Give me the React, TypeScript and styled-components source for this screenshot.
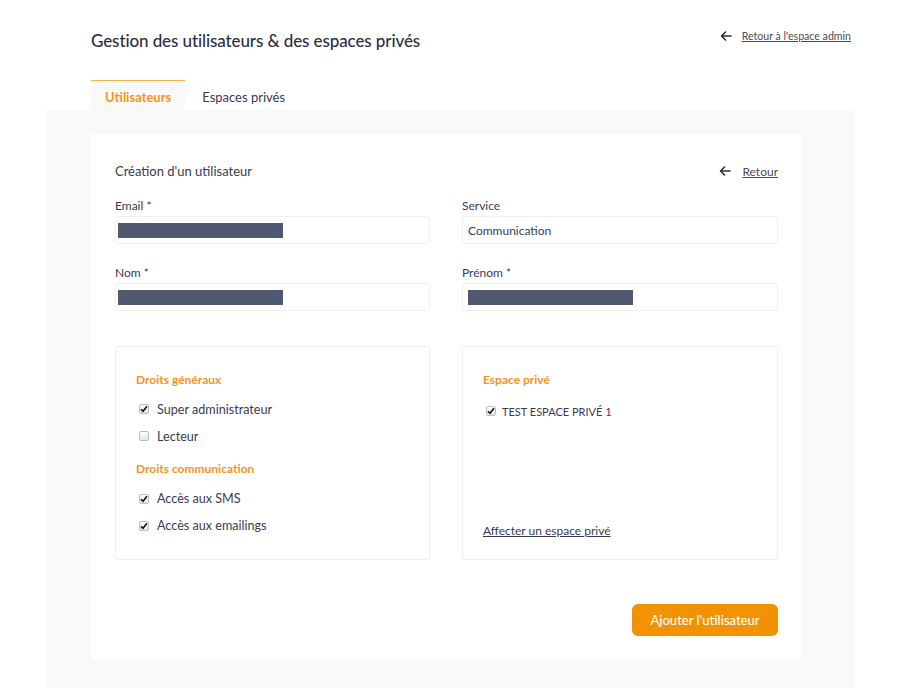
import React from "react";
import styled, { createGlobalStyle } from "styled-components";

const Global = createGlobalStyle`
  html, body { margin: 0; padding: 0; background: #ffffff; }
  body { font-family: Lato, "Noto Sans", sans-serif; color: #3b3b4f; }
  * { box-sizing: border-box; }
`;

const ORANGE = "#f7931e";

const Page = styled.div`
  width: 900px;
  height: 688px;
  overflow: hidden;
  display: flex;
  flex-direction: column;
`;

const Header = styled.header`
  display: flex;
  justify-content: space-between;
  align-items: flex-start;
  padding: 30px 49px 0 91px;
  height: 51px;
`;

const Title = styled.h1`
  margin: 0;
  font-size: 17px;
  line-height: 21px;
  font-weight: 500;
  color: #2e2e44;
  letter-spacing: -0.1px;
`;

const BackLink = styled.a<{ $size?: number; $top?: number }>`
  display: flex;
  align-items: center;
  gap: ${(p) => (p.$size ? 11 : 10)}px;
  margin-top: ${(p) => p.$top ?? 0}px;
  font-size: ${(p) => p.$size ?? 10.6}px;
  color: #4a4a5a;
  text-decoration: none;
  span { text-decoration: underline; }
  svg { flex: none; }
`;

const Tabs = styled.nav`
  display: flex;
  padding: 29px 0 0 91px;
  height: 59px;
  align-items: flex-end;
`;

const Tab = styled.div<{ $active?: boolean }>`
  height: 30px;
  padding: 2px 14px 0 14px;
  display: flex;
  align-items: center;
  font-size: 13px;
  font-weight: ${(p) => (p.$active ? 700 : 400)};
  color: ${(p) => (p.$active ? ORANGE : "#3b3b4f")};
  background: ${(p) => (p.$active ? "#f9f9f9" : "transparent")};
  border-top: 1px solid ${(p) => (p.$active ? "#f7b04f" : "transparent")};
  & + & { margin-left: 3px; }
`;

const Panel = styled.main`
  margin: 0 46px 0 46px;
  background: #f9f9f9;
  flex: 1;
  padding: 24px 53px 28px 45px;
`;

const Card = styled.section`
  background: #ffffff;
  padding: 27px 23px 24px 24px;
  display: flex;
  flex-direction: column;
`;

const CardHeader = styled.div`
  display: flex;
  justify-content: space-between;
  align-items: center;
  height: 20px;
  margin-bottom: 14px;
`;

const CardTitle = styled.h2`
  margin: 0;
  font-size: 13px;
  font-weight: 400;
  color: #3b3b4f;
`;

const Grid = styled.div`
  display: grid;
  grid-template-columns: 315px 316px;
  column-gap: 32px;
  row-gap: 18px;
`;

const Field = styled.div`
  display: flex;
  flex-direction: column;
`;

const Label = styled.label`
  font-size: 12px;
  line-height: 17px;
  color: #3b3b4f;
  height: 17px;
  margin-top: 2px;
  margin-bottom: 2px;
`;

const Input = styled.div<{ $inset?: number }>`
  height: 28px;
  border: 1px solid #f0f0f0;
  border-radius: 3px;
  padding: 0 6px 0 ${(p) => p.$inset ?? 2}px;
  display: flex;
  align-items: center;
  font-size: 12px;
  color: #3b3b4f;
`;

const Redacted = styled.div`
  width: 165px;
  height: 15px;
  background: #4f586e;
`;

const Boxes = styled.div`
  display: grid;
  grid-template-columns: 315px 316px;
  column-gap: 32px;
  margin-top: 35px;
`;

const Box = styled.div`
  height: 214px;
  border: 1px solid #eeeeee;
  border-radius: 3px;
  padding: 25px 20px 20px 20px;
  display: flex;
  flex-direction: column;
`;

const BoxTitle = styled.h3<{ $top?: number; $bottom?: number }>`
  margin: ${(p) => p.$top ?? 0}px 0 ${(p) => p.$bottom ?? 9}px 0;
  font-size: 12px;
  font-weight: 700;
  color: ${ORANGE};
  height: 16px;
`;

const CheckRow = styled.div<{ $small?: boolean }>`
  display: flex;
  align-items: center;
  height: 28.6px;
  padding-left: 3px;
  gap: ${(p) => (p.$small ? 6 : 8)}px;
  font-size: ${(p) => (p.$small ? 11 : 12.6)}px;
  color: #3b3b4f;
`;

const Box10 = styled.span`
  width: 10px;
  height: 10px;
  border: 1px solid #bdbdbd;
  border-radius: 2px;
  background: linear-gradient(#fdfdfd, #e6e6e6);
  display: inline-flex;
  align-items: center;
  justify-content: center;
  flex: none;
`;

const Spacer = styled.div`
  flex: 1;
`;

const Link = styled.a`
  font-size: 12px;
  color: #3b3b4f;
  text-decoration: underline;
  margin-bottom: 1px;
`;

const Footer = styled.div`
  display: flex;
  justify-content: flex-end;
  margin-top: 44px;
`;

const Button = styled.button`
  height: 32px;
  padding: 0 16px;
  background: #f39200;
  border: none;
  border-radius: 6px;
  color: #ffffff;
  font-family: inherit;
  font-size: 13px;
  font-weight: 500;
  width: 146px;
`;

const Arrow = () => (
  <svg width="12" height="10" viewBox="0 0 12 10" fill="none">
    <path d="M11 5H1.5M5.5 1L1.5 5l4 4" stroke="#2a2a3e" strokeWidth="1.6" strokeLinecap="round" strokeLinejoin="round" />
  </svg>
);

const Check = ({ checked }: { checked?: boolean }) => (
  <Box10>
    {checked && (
      <svg width="8" height="8" viewBox="0 0 8 8">
        <path d="M1 4.2l2 2L7 1.2" stroke="#111" strokeWidth="1.6" fill="none" />
      </svg>
    )}
  </Box10>
);

export default function App() {
  return (
    <Page>
      <Global />
      <Header>
        <Title>Gestion des utilisateurs &amp; des espaces privés</Title>
        <BackLink href="#" $top={0}>
          <Arrow />
          <span>Retour à l'espace admin</span>
        </BackLink>
      </Header>
      <Tabs>
        <Tab $active>Utilisateurs</Tab>
        <Tab>Espaces privés</Tab>
      </Tabs>
      <Panel>
        <Card>
          <CardHeader>
            <CardTitle>Création d'un utilisateur</CardTitle>
            <BackLink href="#" $size={12}>
              <Arrow />
              <span>Retour</span>
            </BackLink>
          </CardHeader>
          <Grid>
            <Field>
              <Label>Email *</Label>
              <Input><Redacted /></Input>
            </Field>
            <Field>
              <Label>Service</Label>
              <Input $inset={5}>Communication</Input>
            </Field>
            <Field>
              <Label>Nom *</Label>
              <Input><Redacted /></Input>
            </Field>
            <Field>
              <Label>Prénom *</Label>
              <Input $inset={5}><Redacted /></Input>
            </Field>
          </Grid>
          <Boxes>
            <Box>
              <BoxTitle>Droits généraux</BoxTitle>
              <CheckRow><Check checked />Super administrateur</CheckRow>
              <CheckRow><Check />Lecteur</CheckRow>
              <BoxTitle $top={11} $bottom={10}>Droits communication</BoxTitle>
              <CheckRow><Check checked />Accès aux SMS</CheckRow>
              <CheckRow><Check checked />Accès aux emailings</CheckRow>
            </Box>
            <Box>
              <BoxTitle>Espace privé</BoxTitle>
              <CheckRow $small><Check checked />TEST ESPACE PRIVÉ 1</CheckRow>
              <Spacer />
              <Link href="#">Affecter un espace privé</Link>
            </Box>
          </Boxes>
          <Footer>
            <Button>Ajouter l'utilisateur</Button>
          </Footer>
        </Card>
      </Panel>
    </Page>
  );
}
